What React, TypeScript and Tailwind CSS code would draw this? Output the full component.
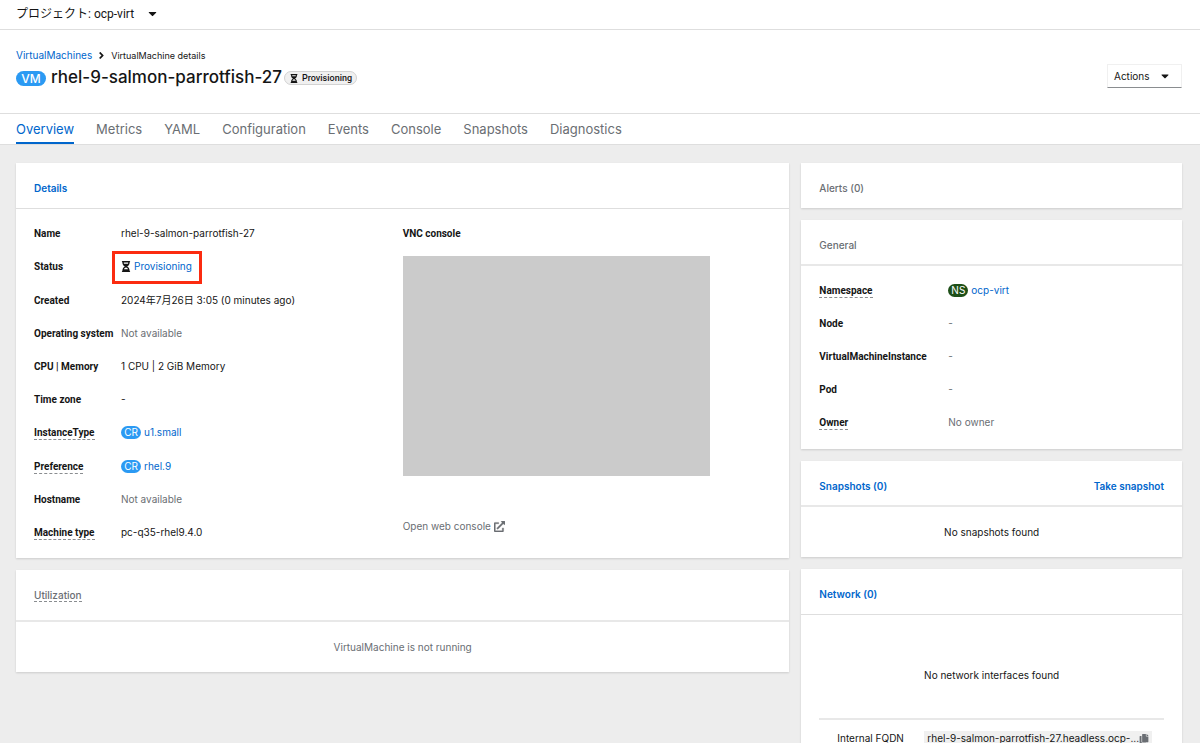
import React from "react";
import { FaAngleRight, FaCaretDown, FaCopy, FaHourglassHalf } from "react-icons/fa";

const tabs = ["Overview", "Metrics", "YAML", "Configuration", "Events", "Console", "Snapshots", "Diagnostics"];

function ExternalLinkIcon() {
  return (
    <svg viewBox="0 0 512 512" className="size-[11px] shrink-0" fill="currentColor" stroke="currentColor" strokeWidth="14" aria-hidden="true">
      <path d="M432 320h-32a16 16 0 0 0-16 16v112H64V128h144a16 16 0 0 0 16-16V80a16 16 0 0 0-16-16H48a48 48 0 0 0-48 48v352a48 48 0 0 0 48 48h352a48 48 0 0 0 48-48V336a16 16 0 0 0-16-16zM488 0H360c-21.400 0-32 25.900-17 41l35.700 35.700L135 320.400a24 24 0 0 0 0 34L157.700 377a24 24 0 0 0 34 0l243.600-243.700L471 169c15 15 41 4.500 41-17V24a24 24 0 0 0-24-24z" />
    </svg>
  );
}

function KindBadge({ children, green }: { children: string; green?: boolean }) {
  return (
    <span
      className={
        green
          ? "flex h-[13px] w-5 items-center justify-center rounded-full bg-[#1e4f18] text-[10px] text-white"
          : "flex h-[13px] w-5 items-center justify-center rounded-full bg-[#2b9af3] text-[10px] text-white"
      }
    >
      {children}
    </span>
  );
}

function ResourceLink({ kind, name, green }: { kind: string; name: string; green?: boolean }) {
  return (
    <span className="flex items-center gap-[3px]">
      <KindBadge green={green}>{kind}</KindBadge>
      <a href="#" className="text-[#0066cc]">{name}</a>
    </span>
  );
}

function Card({ children }: { children: React.ReactNode }) {
  return <section className="bg-white shadow-[0_1px_2px_rgba(3,3,3,0.14)]">{children}</section>;
}

type Row = { label: string; help?: boolean; value: React.ReactNode };

function Term({ label, help }: { label: string; help?: boolean }) {
  return (
    <dt className="flex font-['Roboto'] font-bold whitespace-nowrap">
      {help ? (
        <span className="mt-px border-b border-dashed border-[#8a8d90] leading-[13px]">{label}</span>
      ) : (
        label
      )}
    </dt>
  );
}

const muted = (text: string) => <span className="text-[#6a6e73]">{text}</span>;

const details: Row[] = [
  { label: "Name", value: "rhel-9-salmon-parrotfish-27" },
  {
    label: "Status",
    value: (
      <span className="relative flex items-center gap-[3px]">
        <FaHourglassHalf className="w-[10px] text-[11px]" />
        <a href="#" className="text-[#0066cc]">Provisioning</a>
        <span className="pointer-events-none absolute -top-[8px] -right-[10px] -bottom-[10px] -left-[9px] border-3 border-[#fb2b10]" />
      </span>
    ),
  },
  { label: "Created", value: "2024年7月26日 3:05 (0 minutes ago)" },
  { label: "Operating system", value: muted("Not available") },
  { label: "CPU | Memory", value: "1 CPU | 2 GiB Memory" },
  { label: "Time zone", value: "-" },
  { label: "InstanceType", help: true, value: <ResourceLink kind="CR" name="u1.small" /> },
  { label: "Preference", help: true, value: <ResourceLink kind="CR" name="rhel.9" /> },
  { label: "Hostname", value: muted("Not available") },
  { label: "Machine type", help: true, value: "pc-q35-rhel9.4.0" },
];

const general: Row[] = [
  { label: "Namespace", help: true, value: <ResourceLink kind="NS" name="ocp-virt" green /> },
  { label: "Node", value: muted("-") },
  { label: "VirtualMachineInstance", value: muted("-") },
  { label: "Pod", value: muted("-") },
  { label: "Owner", help: true, value: muted("No owner") },
];

export default function App() {
  return (
    <div className="flex h-screen flex-col overflow-hidden bg-[#ededed] font-['Inter','Noto_Sans_CJK_JP',sans-serif] text-[10px] leading-[15px] text-[#151515]">
      <header className="shrink-0 bg-white">
        <div className="flex h-[30px] items-center border-b border-[#dedede] px-4 pb-0.5">
          <button
            type="button"
            className="flex items-center gap-3 font-['Roboto','Noto_Sans_CJK_JP',sans-serif] text-[12px] leading-[18px]"
          >
            <span>プロジェクト: ocp-virt</span>
            <FaCaretDown className="text-[13px]" />
          </button>
        </div>

        <div className="flex h-[83px] items-start justify-between pr-[18px] pl-4">
          <div className="pt-[18px]">
            <nav aria-label="Breadcrumb" className="flex items-center gap-[6px]">
              <a href="#" className="text-[#0066cc]">VirtualMachines</a>
              <FaAngleRight className="w-[7px] text-[11px]" />
              <span className="text-[9px]">VirtualMachine details</span>
            </nav>
            <div className="flex items-center pt-0.5">
              <span className="mt-0.5 flex h-[15px] w-[30px] items-center justify-center rounded-full bg-[#2b9af3] text-[12px] font-medium text-white">
                VM
              </span>
              <h1 className="ml-[5px] text-[17px] leading-[24px] font-medium">rhel-9-salmon-parrotfish-27</h1>
              <span className="mt-[2px] ml-0.5 flex h-[14px] items-center gap-[3px] rounded-full border border-[#d2d2d2] bg-[#f0f0f0] px-1 font-['Roboto'] text-[9px] font-medium">
                <FaHourglassHalf className="w-[10px] text-[9px]" />
                Provisioning
              </span>
            </div>
          </div>
          <button
            type="button"
            className="mt-[34px] flex h-6 w-[75px] items-center justify-between border border-[#f0f0f0] border-b-[#8a8d90] pr-[10px] pl-1.5"
          >
            Actions
            <FaCaretDown className="text-[12px]" />
          </button>
        </div>

        <nav aria-label="Details tabs" className="flex h-8 gap-[22px] border-t border-b border-[#dedede] px-4 text-[13px]">
          {tabs.map((tab, i) => (
            <a
              key={tab}
              href="#"
              aria-current={i === 0 ? "page" : undefined}
              className={
                i === 0
                  ? "flex items-center border-b-2 border-[#0066cc] pt-0.5 text-[#0066cc]"
                  : "flex items-center border-b-2 border-transparent pt-0.5 text-[#6a6e73]"
              }
            >
              {tab}
            </a>
          ))}
        </nav>
      </header>

      <main className="grid min-h-0 flex-1 grid-cols-12 items-start gap-x-3 overflow-hidden pt-[18px] pr-[18px] pl-4">
        <div className="col-span-8 flex flex-col gap-3">
          <Card>
            <h2 className="flex h-[46px] items-center border-b border-[#dedede] px-[18px] pt-1.5 font-semibold">
              <a href="#" className="text-[#0066cc]">Details</a>
            </h2>
            <div className="grid grid-cols-2 px-[18px] pt-2 pb-[9px]">
              <dl className="flex flex-col">
                {details.map((row) => (
                  <div key={row.label} className="grid flex-1 grid-cols-[87px_1fr] items-center">
                    <Term label={row.label} help={row.help} />
                    <dd className="flex">{row.value}</dd>
                  </div>
                ))}
              </dl>
              <div className="flex flex-col items-start pt-[9px] pb-[15px]">
                <h3 className="font-['Roboto'] font-bold">VNC console</h3>
                <div className="mt-[15px] h-[220px] w-5/6 bg-[#cbcbcb]" />
                <a href="#" className="mt-[43px] flex items-center gap-[3px] text-[#6a6e73]">
                  Open web console
                  <ExternalLinkIcon />
                </a>
              </div>
            </div>
          </Card>

          <Card>
            <h2 className="flex h-[52px] items-center border-b-2 border-[#e8e8e8] px-[18px] font-medium text-[#6a6e73]">
              <span className="border-b border-dashed border-[#8a8d90] leading-[12px]">Utilization</span>
            </h2>
            <p className="flex h-[50px] items-center justify-center text-[#6a6e73]">VirtualMachine is not running</p>
          </Card>
        </div>

        <div className="col-span-4 flex flex-col gap-3">
          <Card>
            <h2 className="flex h-[45px] items-center px-[18px] pt-1.5 font-medium text-[#6a6e73]">Alerts (0)</h2>
          </Card>

          <Card>
            <h2 className="flex h-[46px] items-center border-b-2 border-[#e8e8e8] px-[18px] pt-1.5 font-medium text-[#6a6e73]">
              General
            </h2>
            <dl className="px-[18px] pt-2 pb-[10px]">
              {general.map((row) => (
                <div key={row.label} className="grid h-[33px] grid-cols-[129px_1fr] items-center">
                  <Term label={row.label} help={row.help} />
                  <dd className="flex">{row.value}</dd>
                </div>
              ))}
            </dl>
          </Card>

          <Card>
            <div className="flex h-[46px] items-center justify-between border-b-2 border-[#e8e8e8] px-[18px] pt-1.5 font-semibold text-[#0066cc]">
              <h2>
                <a href="#">Snapshots (0)</a>
              </h2>
              <button type="button">Take snapshot</button>
            </div>
            <p className="flex h-[50px] items-center justify-center">No snapshots found</p>
          </Card>

          <Card>
            <h2 className="flex h-[46px] items-center border-b border-[#dedede] px-[18px] pt-1.5 font-semibold">
              <a href="#" className="text-[#0066cc]">Network (0)</a>
            </h2>
            <div className="px-[18px] pb-[18px]">
              <p className="flex h-[103px] items-center justify-center pt-[18px]">No network interfaces found</p>
              <dl className="grid grid-cols-[87px_minmax(0,1fr)] items-center border-t-2 border-[#e8e8e8] pt-[11px] pr-3 pl-[18px]">
                <dt>Internal FQDN</dt>
                <dd className="flex items-center justify-between bg-[#f0f0f0] pr-[3px] pl-[3px]">
                  <span className="whitespace-nowrap">rhel-9-salmon-parrotfish-27.headless.ocp-...</span>
                  <button type="button" aria-label="Copy to clipboard" className="text-[#6a6e73]">
                    <FaCopy className="size-[10px]" />
                  </button>
                </dd>
              </dl>
            </div>
          </Card>
        </div>
      </main>
    </div>
  );
}
